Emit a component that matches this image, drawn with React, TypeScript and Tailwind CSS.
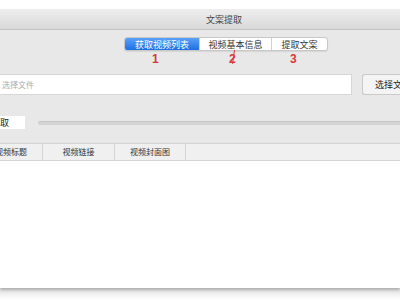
import React from "react";

export default function App() {
  const font = { fontFamily: '"Noto Sans CJK SC", "Liberation Sans", sans-serif' };
  return (
    <div className="w-[400px] h-[300px] bg-white overflow-hidden flex flex-col" style={font}>
      <div className="h-[9px] bg-white shrink-0" />
      <div className="h-[21px] shrink-0 bg-gradient-to-b from-[#eeeeee] to-[#d9d9d9] border-b border-[#c4c4c4] flex items-center">
        <span className="ml-[206px] text-[9px] leading-none text-[#444]">文案提取</span>
      </div>
      <div className="flex flex-col bg-[#e8e8e8] shrink-0">
        <div className="pt-[7px] pl-[124px] flex">
          <div className="flex h-[14px] rounded-[3px] border border-[#c8c8c8] overflow-hidden bg-white shadow-[0_1px_1px_rgba(0,0,0,0.08)]">
            <div className="w-[74px] bg-gradient-to-b from-[#5aa0f7] to-[#1b6fe3] text-white text-[9px] leading-none flex items-center justify-center">获取视频列表</div>
            <div className="w-[72px] border-l border-[#d0d0d0] text-[#333] text-[9px] leading-none flex items-center justify-center">视频基本信息</div>
            <div className="w-[56px] border-l border-[#d0d0d0] text-[#333] text-[9px] leading-none flex items-center justify-center">提取文案</div>
          </div>
        </div>
        <div className="relative h-[16px] text-[#d9383a] text-[12px] leading-none font-semibold" style={{ fontFamily: '"Liberation Sans", sans-serif' }}>
          <span className="absolute left-[152px] top-[2px]">1</span>
          <span className="absolute left-[229px] top-[2px]">2</span>
          <span className="absolute left-[233px] top-[-1px] w-[1px] h-[14px] bg-[#d9383a] rotate-[8deg]" />
          <span className="absolute left-[290px] top-[2px]">3</span>
        </div>
        <div className="flex items-center mt-[7px] h-[21px]">
          <div className="w-[352px] h-full bg-white border border-[#d6d6d6] border-l-0 flex items-center pl-[2px] text-[8px] text-[#aaa]">选择文件</div>
          <div className="ml-[10px] flex-1 h-full bg-[#f4f4f4] border border-[#c9c9c9] border-r-0 rounded-l-[3px] flex items-center pl-[12px] text-[9px] text-[#222] whitespace-nowrap overflow-hidden">选择文件</div>
        </div>
        <div className="flex items-center mt-[21px] h-[13px]">
          <div className="w-[25px] h-full bg-white flex items-center text-[9px] text-[#222] overflow-hidden whitespace-nowrap">
            <span className="-ml-[9px]">提取</span>
          </div>
          <div className="ml-[13px] flex-1 h-[4px] rounded-l-full bg-[#d4d4d4] border-t border-[#c6c6c6]" />
        </div>
        <div className="h-[14px]" />
      </div>
      <div className="flex-1 flex flex-col bg-white shadow-[0_2px_3px_rgba(0,0,0,0.25)] z-10">
        <div className="h-[18px] bg-[#f0f0f0] border-y border-[#d4d4d4] flex text-[8px] text-[#333] leading-none shrink-0">
          <div className="w-[43px] border-r border-[#d4d4d4] flex items-center overflow-hidden whitespace-nowrap">
            <span className="-ml-[5px]">视频标题</span>
          </div>
          <div className="w-[72px] border-r border-[#d4d4d4] flex items-center justify-center">视频链接</div>
          <div className="w-[71px] border-r border-[#d4d4d4] flex items-center justify-center">视频封面图</div>
          <div className="flex-1" />
        </div>
        <div className="flex-1 bg-white" />
      </div>
      <div className="h-[12px] shrink-0 bg-gradient-to-b from-[#e2e2e2] to-white" />
    </div>
  );
}
